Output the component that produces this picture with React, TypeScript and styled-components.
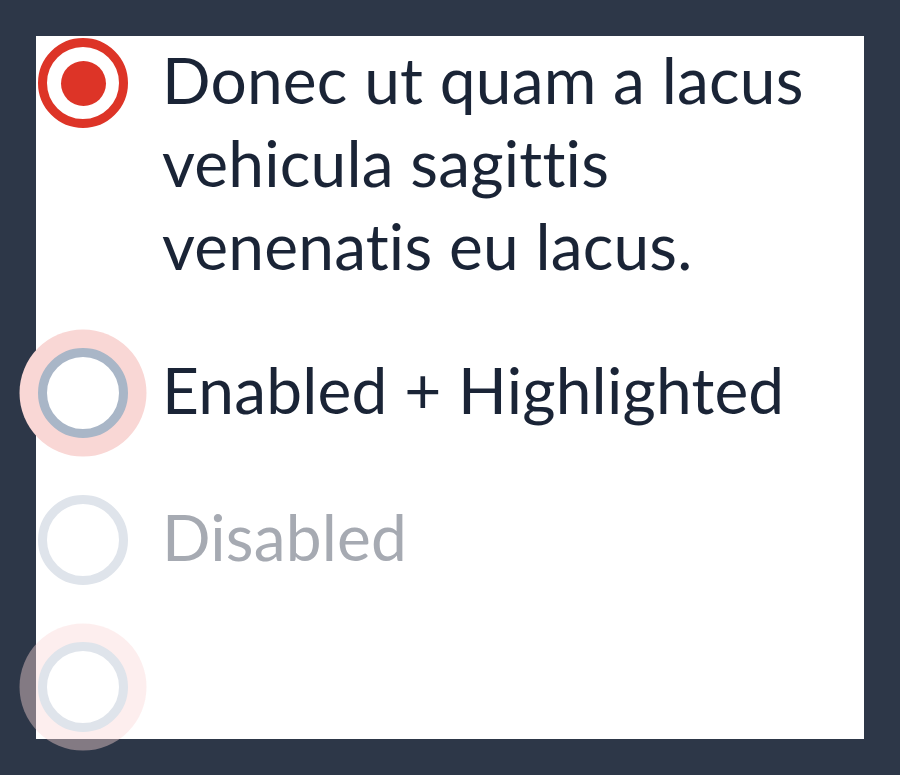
import { createGlobalStyle, styled } from "styled-components";

const GlobalStyle = createGlobalStyle`
  html, body {
    margin: 0;
    padding: 0;
    background: #2d3748;
  }
  body {
    font-family: Lato, "Noto Sans", sans-serif;
  }
`;

type RadioProps = {
  $checked?: boolean;
  $disabled?: boolean;
  $highlighted?: boolean;
};

const options = [
  {
    label: (
      <>
        Donec ut quam a lacus
        <br />
        vehicula sagittis
        <br />
        venenatis eu lacus.
      </>
    ),
    checked: true,
  },
  { label: "Enabled + Highlighted", highlighted: true },
  { label: "Disabled", disabled: true },
  { label: "", disabled: true, highlighted: true },
];

const App = () => {
  return (
    <>
      <GlobalStyle />
      <StyledPanel>
        <StyledList>
          {options.map((o, i) => (
            <StyledRow key={i}>
              <StyledRadio
                role="radio"
                aria-checked={!!o.checked}
                aria-disabled={!!o.disabled}
                $checked={o.checked}
                $disabled={o.disabled}
                $highlighted={o.highlighted}
              />
              <StyledLabel $disabled={o.disabled}>{o.label}</StyledLabel>
            </StyledRow>
          ))}
        </StyledList>
      </StyledPanel>
    </>
  );
};

export default App;

const StyledPanel = styled.div`
  margin: 36px;
  width: 828px;
  height: 703px;
  background: #ffffff;
  box-sizing: border-box;
`;

const StyledList = styled.div`
  display: flex;
  flex-direction: column;
  gap: 57px;
  padding: 2px 0 0 2px;
`;

const StyledRow = styled.div`
  display: flex;
  align-items: flex-start;
  gap: 34px;
`;

const haloColor = (p: RadioProps) => {
  if (!p.$highlighted) return "none";
  return p.$disabled
    ? "0 0 0 18.5px rgba(250, 214, 214, 0.42)"
    : "0 0 0 18.5px #f9d7d5";
};

const ringColor = (p: RadioProps) => {
  if (p.$checked) return "#dd3427";
  if (p.$disabled) return "#dfe4eb";
  return "#a9b6c7";
};

const StyledRadio = styled.span<RadioProps>`
  position: relative;
  flex: none;
  width: 90px;
  height: 90px;
  box-sizing: border-box;
  border-radius: 50%;
  border: 9px solid ${ringColor};
  background: #ffffff;
  box-shadow: ${haloColor};

  &::after {
    content: "";
    display: ${(p) => (p.$checked ? "block" : "none")};
    position: absolute;
    left: 50%;
    top: 50%;
    width: 45px;
    height: 45px;
    margin: -22.5px 0 0 -22.5px;
    border-radius: 50%;
    background: #dd3427;
  }
`;

const StyledLabel = styled.div<{ $disabled?: boolean }>`
  padding-bottom: 4px;
  font-size: 64px;
  line-height: 83px;
  letter-spacing: 0.2px;
  font-variant-ligatures: none;
  color: ${(p) => (p.$disabled ? "#a6aab2" : "#1a2436")};
`;
